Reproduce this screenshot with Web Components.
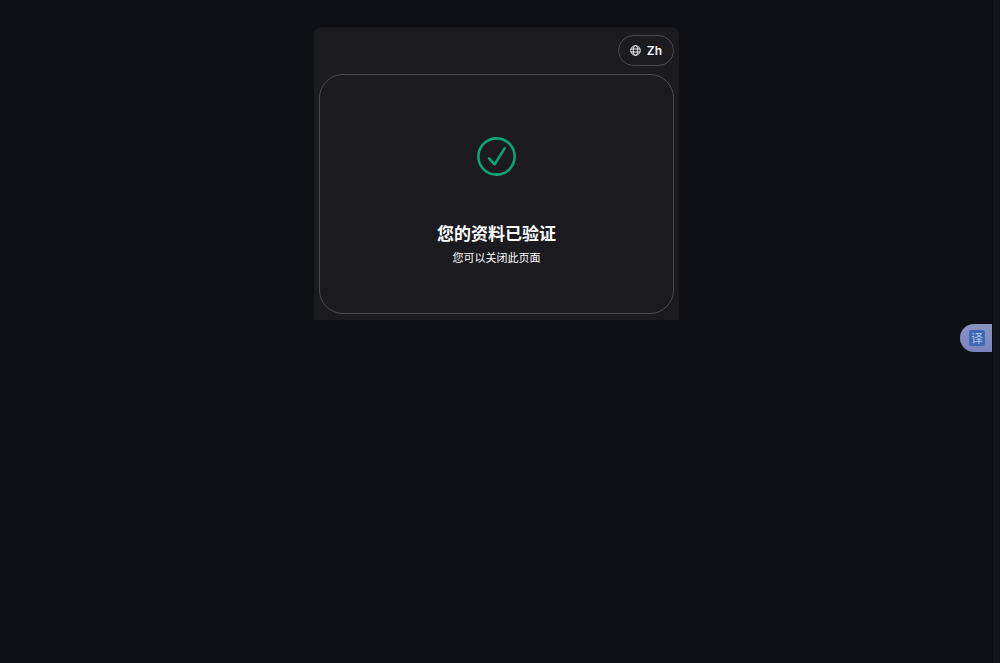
<!DOCTYPE html>
<html lang="zh">
<head>
  <meta charset="UTF-8">
  <meta name="viewport" content="width=device-width, initial-scale=1.0">
  <title>您的资料已验证</title>
  <style>
    body {
      margin: 0;
      background-color: #0e0f14;
      color: #ffffff;
      font-family: "Noto Sans", "Noto Sans CJK SC", sans-serif;
    }
  </style>
</head>
<body>
  <verify-page>
    <verify-panel>
      <language-button slot="toolbar">Zh</language-button>
      <status-card>
        <check-icon slot="icon"></check-icon>
        <span slot="title">您的资料已验证</span>
        <span slot="message">您可以关闭此页面</span>
      </status-card>
    </verify-panel>
    <translate-tab slot="floating">译</translate-tab>
  </verify-page>

  <script>
    class VerifyPage extends HTMLElement {
      constructor() {
        super();
        this.shadowDOM = this.attachShadow({mode: "open"});
      }

      connectedCallback() {
        this.render();
      }

      render() {
        this.shadowDOM.innerHTML = `
        <style>
          :host {
            display: flex;
            min-height: 100vh;
          }

          main {
            flex: 1;
            display: flex;
            justify-content: center;
            align-items: flex-start;
            padding-top: 27px;
          }

          /* scrollbar track */
          .rail {
            width: 7px;
            background-color: #14151a;
          }
        </style>
        <main><slot></slot></main>
        <div class="rail"></div>
        <slot name="floating"></slot>`;
      }
    }
    customElements.define("verify-page", VerifyPage);

    class VerifyPanel extends HTMLElement {
      constructor() {
        super();
        this.shadowDOM = this.attachShadow({mode: "open"});
      }

      connectedCallback() {
        this.render();
      }

      render() {
        this.shadowDOM.innerHTML = `
        <style>
          :host {
            display: flex;
            flex-direction: column;
            gap: 8px;
            box-sizing: border-box;
            width: 100%;
            max-width: 365px;
            padding: 8px 5px 6px;
            border-radius: 8px 8px 0 0;
            background-color: #1b1b1f;
          }

          header {
            display: flex;
            justify-content: flex-end;
          }
        </style>
        <header><slot name="toolbar"></slot></header>
        <slot></slot>`;
      }
    }
    customElements.define("verify-panel", VerifyPanel);

    class LanguageButton extends HTMLElement {
      constructor() {
        super();
        this.shadowDOM = this.attachShadow({mode: "open"});
      }

      connectedCallback() {
        this.render();
      }

      render() {
        this.shadowDOM.innerHTML = `
        <style>
          :host {
            display: block;
          }

          button {
            display: flex;
            align-items: center;
            gap: 6px;
            height: 31px;
            padding: 0 11px;
            border: 1px solid #4b4b4f;
            border-radius: 16px;
            background: none;
            color: #ffffff;
            font: 600 12px/16px Inter, sans-serif;
            cursor: pointer;
          }

          svg {
            width: 11px;
            height: 11px;
            fill: none;
            stroke: #f0f0f2;
          }
        </style>
        <button type="button">
          <svg viewBox="0 0 11 11" aria-hidden="true">
            <circle cx="5.5" cy="5.5" r="4.8"/>
            <ellipse cx="5.5" cy="5.5" rx="2.2" ry="4.8"/>
            <path d="M1 4h9M1 7h9"/>
          </svg>
          <slot></slot>
        </button>`;
      }
    }
    customElements.define("language-button", LanguageButton);

    class StatusCard extends HTMLElement {
      constructor() {
        super();
        this.shadowDOM = this.attachShadow({mode: "open"});
      }

      connectedCallback() {
        this.render();
      }

      render() {
        this.shadowDOM.innerHTML = `
        <style>
          :host {
            display: flex;
            flex-direction: column;
            align-items: center;
            padding: 62px 16px 46px;
            border: 1px solid #4b4b4f;
            border-radius: 24px;
            text-align: center;
          }

          h1 {
            margin: 45px 0 0;
            font-size: 17px;
            line-height: 26px;
            font-weight: 700;
          }

          p {
            margin: 2px 0 0;
            font-size: 11px;
            line-height: 18px;
          }
        </style>
        <slot name="icon"></slot>
        <h1><slot name="title"></slot></h1>
        <p><slot name="message"></slot></p>`;
      }
    }
    customElements.define("status-card", StatusCard);

    class CheckIcon extends HTMLElement {
      constructor() {
        super();
        this.shadowDOM = this.attachShadow({mode: "open"});
      }

      connectedCallback() {
        this.render();
      }

      render() {
        this.shadowDOM.innerHTML = `
        <style>
          :host {
            display: block;
          }

          svg {
            display: block;
            width: 39px;
            height: 39px;
            fill: none;
            stroke: #0aa574;
            stroke-width: 2.6;
            stroke-linecap: round;
            stroke-linejoin: round;
          }
        </style>
        <svg viewBox="0 0 39 39" aria-hidden="true">
          <circle cx="19.5" cy="19.5" r="18.1"/>
          <path d="M12 21.4L17.6 27.4L27.6 11.4"/>
        </svg>`;
      }
    }
    customElements.define("check-icon", CheckIcon);

    /* translate tab, floats over the page on the right side */
    class TranslateTab extends HTMLElement {
      constructor() {
        super();
        this.shadowDOM = this.attachShadow({mode: "open"});
      }

      connectedCallback() {
        this.render();
      }

      render() {
        this.shadowDOM.innerHTML = `
        <style>
          :host {
            position: fixed;
            top: 324px;
            right: 8px;
          }

          button {
            display: flex;
            align-items: center;
            justify-content: flex-end;
            width: 32px;
            height: 28px;
            padding: 0 7px 0 0;
            border: 0;
            border-radius: 14px 0 0 14px;
            background: linear-gradient(#8795c4, #7c83be);
            cursor: pointer;
          }

          span {
            width: 16px;
            border-radius: 3px;
            background-color: #3c68b4;
            color: #b4c5e6;
            font: 12px/16px "Noto Sans CJK SC", sans-serif;
            text-align: center;
          }
        </style>
        <button type="button"><span><slot></slot></span></button>`;
      }
    }
    customElements.define("translate-tab", TranslateTab);
  </script>
</body>
</html>
